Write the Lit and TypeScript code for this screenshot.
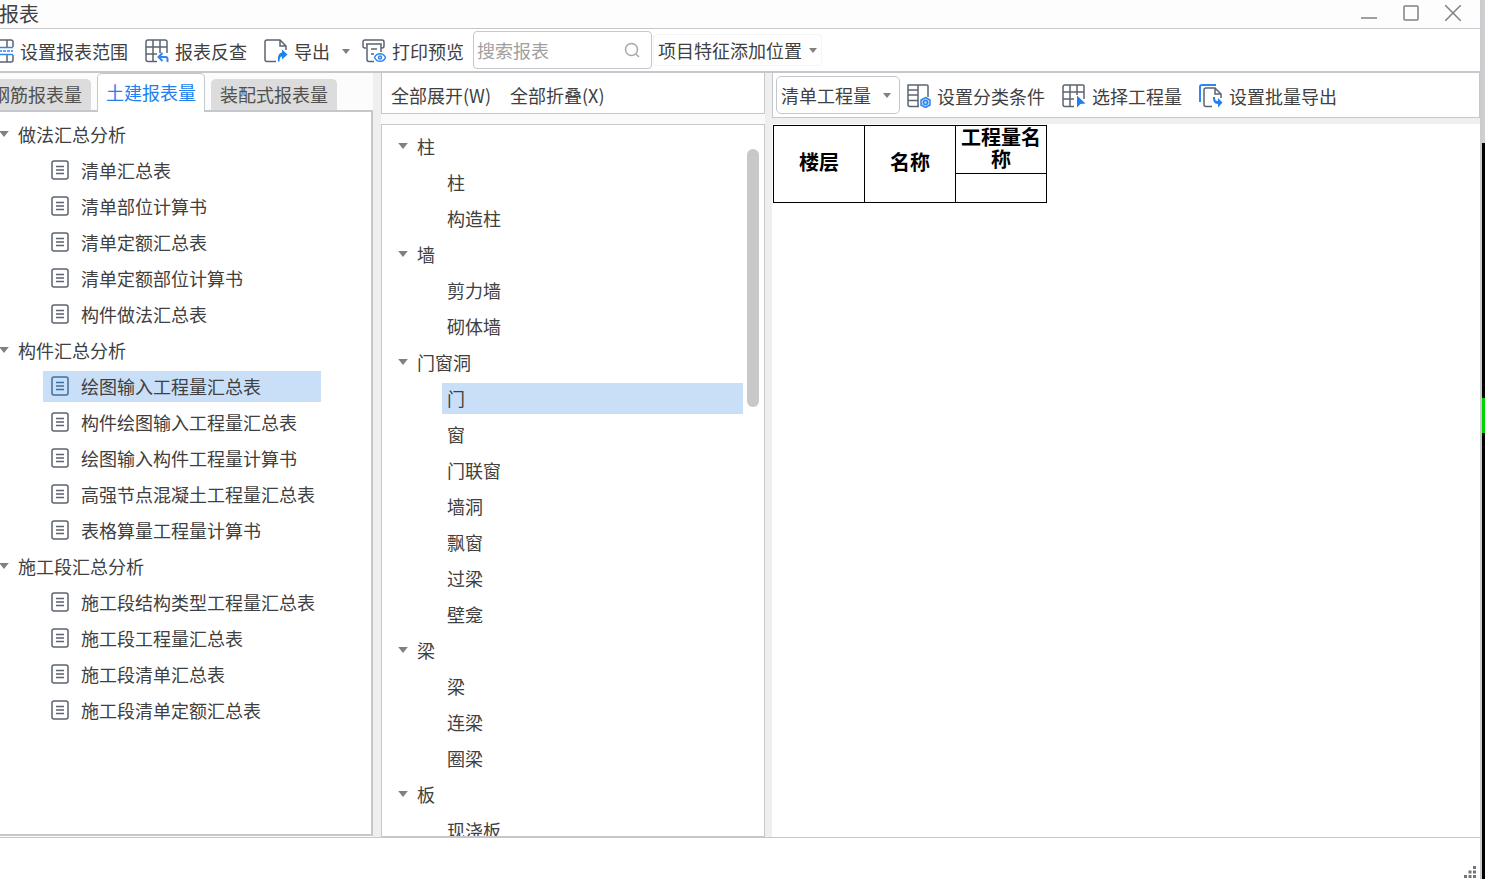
import { LitElement, html, svg, css, nothing } from "lit";
import { customElement, state } from "lit/decorators.js";
import { classMap } from "lit/directives/class-map.js";

interface Group {
  name: string;
  items: string[];
}

const REPORTS: Group[] = [
  { name: "做法汇总分析", items: ["清单汇总表", "清单部位计算书", "清单定额汇总表", "清单定额部位计算书", "构件做法汇总表"] },
  {
    name: "构件汇总分析",
    items: ["绘图输入工程量汇总表", "构件绘图输入工程量汇总表", "绘图输入构件工程量计算书", "高强节点混凝土工程量汇总表", "表格算量工程量计算书"],
  },
  { name: "施工段汇总分析", items: ["施工段结构类型工程量汇总表", "施工段工程量汇总表", "施工段清单汇总表", "施工段清单定额汇总表"] },
];

const COMPONENTS: Group[] = [
  { name: "柱", items: ["柱", "构造柱"] },
  { name: "墙", items: ["剪力墙", "砌体墙"] },
  { name: "门窗洞", items: ["门", "窗", "门联窗", "墙洞", "飘窗", "过梁", "壁龛"] },
  { name: "梁", items: ["梁", "连梁", "圈梁"] },
  { name: "板", items: ["现浇板"] },
];

const TABS = ["钢筋报表量", "土建报表量", "装配式报表量"];

const glyphs = {
  range: svg`
    <path d="M1 8V3a2 2 0 0 1 2-2h18a2 2 0 0 1 2 2v5M1 16v5a2 2 0 0 0 2 2h18a2 2 0 0 0 2-2v-5"/>
    <path d="M9 1v7M17 1v7M9 16v7M17 16v7"/>
    <path class="blue" d="M1 8.500h22M1 15.500h22"/>
    <path class="blue" d="M1 12h22" stroke-dasharray="3 1"/>`,
  lookup: svg`
    <path d="M12 22.500H3a2 2 0 0 1-2-2V3a2 2 0 0 1 2-2h17a2 2 0 0 1 2 2v11"/>
    <path d="M8 1v21M15 1v13M1 8h21M1 15h11"/>
    <path class="blue thick" d="M22.500 23v-3a2 2 0 0 0-2-2H14M17.500 14l-4 4 4 4"/>`,
  exportFile: svg`
    <path d="M12 22.500H3a2 2 0 0 1-2-2V3a2 2 0 0 1 2-2h13l6 6v4M16 1v6h6"/>
    <path class="fill" d="M18 10.500l5.500 5-5.500 5v-3c-2 0-2.500 2-2.500 5h-1.500c-.500-5.500 1-8.500 4-9z"/>`,
  preview: svg`
    <path d="M4 9H3a2 2 0 0 1-2-2V3a2 2 0 0 1 2-2h17a2 2 0 0 1 2 2v4a2 2 0 0 1-2 2h-1"/>
    <path d="M4 5h15v8M5 5v15.500a2 2 0 0 0 2 2h5M9 10h6M9 15h3"/>
    <path class="blue" d="M12.500 18.500c2.500-5 8.500-5 11 0-2.500 5-8.500 5-11 0z"/>
    <circle class="blue" cx="18" cy="18.500" r="1.500"/>`,
  classify: svg`
    <path d="M12 22.500H3a2 2 0 0 1-2-2V1h19a1 1 0 0 1 1 1v11M11 1v21.500M1 6h10M1 11h10M1 16.500h10"/>
    <path class="blue tint" d="M18.500 13.500l4.500 2.500v5l-4.500 2.500-4.500-2.500v-5z"/>
    <circle class="blue" cx="18.500" cy="18.500" r="2"/>`,
  pick: svg`
    <path d="M12 22.500H3a2 2 0 0 1-2-2V3a2 2 0 0 1 2-2h18a1 1 0 0 1 1 1v13"/>
    <path d="M8 1v21M15 1v10M1 8h21M1 15h11"/>
    <path class="fill" d="M15 11.500l8.500 8-5 .500-3.500 3.500z"/>`,
  batch: svg`
    <path class="blue thick" d="M1 18V3a2 2 0 0 1 2-2h14"/>
    <path d="M13 22.500H7a2 2 0 0 1-2-2V6a2 2 0 0 1 2-2h9l6 6v4M16 4v6h6"/>
    <path class="fill" d="M14 13h2c0 3 .500 4 3 4v-3l4.500 4.500-4.500 5v-3.500c-4 0-5-3-5-7z"/>`,
};

const icon = (name: keyof typeof glyphs) =>
  html`<svg class="icon" viewBox="0 0 24 24" aria-hidden="true">${glyphs[name]}</svg>`;

const caret = () =>
  html`<svg class="caret" viewBox="0 0 8 5" aria-hidden="true"><path d="M0 0h8L4 5z" /></svg>`;

const shared = css`
  :host {
    font-family: "Noto Sans CJK SC", sans-serif;
    font-size: 18px;
    color: #404040;
  }
  * {
    box-sizing: border-box;
  }
  button,
  input,
  select {
    font: inherit;
    color: inherit;
    background: none;
    border: 0;
    margin: 0;
    padding: 0;
    outline: none;
  }
  button {
    display: flex;
    align-items: center;
    white-space: nowrap;
  }
  .caret {
    width: 8px;
    height: 5px;
    flex: none;
    fill: #808080;
  }
`;

@customElement("report-tree")
class ReportTree extends LitElement {
  static properties = {
    groups: { attribute: false },
    selected: { state: true },
    closed: { state: true },
    initial: {},
    icons: { type: Boolean, reflect: true },
  };

  declare groups: Group[];
  declare selected: string;
  declare closed: string[];
  declare initial: string;
  declare icons: boolean;

  constructor() {
    super();
    this.groups = [];
    this.closed = [];
    this.selected = "";
    this.initial = "";
    this.icons = false;
  }

  static styles = [
    shared,
    css`
      :host {
        display: block;
      }
      ul {
        list-style: none;
        margin: 0;
        padding: 0;
      }
      .group,
      .item {
        width: 100%;
        text-align: left;
      }
      .group {
        height: 36px;
        gap: 9px;
      }
      .group .caret {
        width: 10px;
        height: 6px;
      }
      .row {
        height: 36px;
        display: flex;
        align-items: center;
        padding-left: 44px;
      }
      .item {
        height: 31px;
        padding-left: 5px;
      }
      .item.on {
        background: #c9dff8;
      }
      :host([icons]) .item {
        padding-left: 8px;
        gap: 12px;
      }
      .sheet {
        width: 18px;
        height: 20px;
        flex: none;
        fill: none;
        stroke: #5c6470;
        stroke-width: 1.5;
      }
      .on .sheet {
        stroke: #3f6f9f;
      }
    `,
  ];

  willUpdate() {
    if (!this.selected) this.selected = this.initial;
  }

  collapseAll(all: boolean) {
    this.closed = all ? this.groups.map((g) => g.name) : [];
  }

  private toggle(name: string) {
    this.closed = this.closed.includes(name) ? this.closed.filter((n) => n !== name) : [...this.closed, name];
  }

  private item(group: string, name: string) {
    const key = `${group}/${name}`;
    return html`<li class="row">
      <button class=${classMap({ item: true, on: key === this.selected })} @click=${() => (this.selected = key)}>
        ${this.icons
          ? html`<svg class="sheet" viewBox="0 0 18 20" aria-hidden="true">
              <rect x="1" y="1" width="16" height="18" rx="2" />
              <path d="M5 6.500h8M5 10h8M5 13.500h8" />
            </svg>`
          : nothing}${name}
      </button>
    </li>`;
  }

  render() {
    return html`<ul>
      ${this.groups.map(
        (g) => html`<li>
          <button class="group" aria-expanded=${!this.closed.includes(g.name)} @click=${() => this.toggle(g.name)}>
            ${caret()}${g.name}
          </button>
          ${this.closed.includes(g.name) ? nothing : html`<ul>${g.items.map((i) => this.item(g.name, i))}</ul>`}
        </li>`
      )}
    </ul>`;
  }
}

@customElement("app-root")
class AppRoot extends LitElement {
  @state() tab = 1;

  static styles = [
    shared,
    css`
      :host {
        display: grid;
        grid-template-columns: minmax(0, 1fr) 3px;
        height: 100vh;
        overflow: hidden;
        background: #fff;
        line-height: 24px;
      }
      .window {
        display: flex;
        flex-direction: column;
        min-height: 0;
        border-right: 2px solid #c9cdd1;
      }
      .desktop {
        display: flex;
        flex-direction: column;
        background: #000;
      }
      .desktop .sky {
        height: 143px;
        background: #cfcfcf;
      }
      .desktop .mark {
        height: 35px;
        margin-top: 255px;
        background: #00d400;
      }
      .title {
        height: 29px;
        flex: none;
        display: flex;
        justify-content: space-between;
        align-items: center;
        border-bottom: 1px solid #c4c8cc;
        background: #fdfdfd;
        padding-right: 19px;
      }
      h1 {
        margin: 0 0 0 -1px;
        font-size: 20px;
        line-height: 28px;
        font-weight: 400;
      }
      .controls {
        display: flex;
        gap: 26px;
        padding-bottom: 2px;
      }
      .controls svg {
        width: 16px;
        height: 16px;
        fill: none;
        stroke: #808080;
        stroke-width: 1.5;
      }
      .toolbar {
        height: 44px;
        flex: none;
        display: flex;
        align-items: center;
        border-bottom: 2px solid #c4c8cc;
      }
      .tool {
        gap: 6px;
        padding-top: 2px;
        margin-right: 17px;
      }
      .toolbar > .tool:first-child {
        margin-left: -10px;
      }
      .tool .caret {
        margin-left: 6px;
      }
      .tool.menu {
        margin-right: 12px;
      }
      .icon {
        width: 24px;
        height: 24px;
        flex: none;
        fill: none;
        stroke: #5c6470;
        stroke-width: 1.5;
      }
      .icon .blue {
        stroke: #2f86f0;
      }
      .icon .tint {
        fill: #b8d8fb;
      }
      .icon .thick {
        stroke-width: 2;
      }
      .icon .fill {
        fill: #2080f0;
        stroke: none;
      }
      .search {
        width: 179px;
        height: 38px;
        display: flex;
        align-items: center;
        border: 1px solid #c4c8cc;
        border-radius: 4px;
        padding: 0 11px 0 3px;
        margin-left: -8px;
      }
      .search input {
        flex: 1;
        min-width: 0;
      }
      .search input::placeholder {
        color: #a0a0a0;
        opacity: 1;
      }
      .search svg {
        width: 16px;
        height: 16px;
        fill: none;
        stroke: #a8a8a8;
        stroke-width: 1.5;
      }
      .place {
        height: 32px;
        gap: 7px;
        margin-left: 1px;
        padding: 0 4px;
        border: 1px solid #f4f4f4;
        border-radius: 4px;
      }
      .main {
        flex: 1;
        min-height: 0;
        display: grid;
        grid-template-columns: 373px 384px minmax(0, 1fr);
        gap: 8px;
        background: #efefef;
        border-bottom: 1px solid #c4c8cc;
      }
      .left,
      .middle,
      .right {
        display: flex;
        flex-direction: column;
        min-width: 0;
        min-height: 0;
      }
      .left {
        background: #fcfcfc;
      }
      .tabs {
        height: 37px;
        flex: none;
        display: flex;
        align-items: flex-end;
        gap: 6px;
        margin-left: -17px;
      }
      .tab {
        height: 31px;
        padding: 0 8px 3px;
        background: #dcdcdc;
        border: 1px solid #dcdcdc;
        border-bottom: 0;
        border-radius: 5px 5px 0 0;
        color: #505050;
      }
      .tab.on {
        height: 39px;
        padding: 0 8px 2px;
        margin-bottom: -2px;
        z-index: 1;
        background: #fff;
        border-color: #c4c8cc;
        color: #2080f0;
      }
      .left .panel {
        flex: 1;
        min-height: 0;
        overflow: hidden;
        background: #fff;
        border: 2px solid #c4c8cc;
        border-left: 0;
        padding: 4px 50px 0 0;
        margin-bottom: 1px;
      }
      .left report-tree {
        margin-left: -1px;
      }
      .middle {
        gap: 10px;
        background: #fafafa;
      }
      .actions {
        height: 41px;
        flex: none;
        display: flex;
        gap: 19px;
        align-items: center;
        padding: 4px 9px 0;
        background: #fff;
        border: 1px solid #c4c8cc;
        border-top: 0;
      }
      .middle .panel {
        flex: 1;
        min-height: 0;
        overflow: hidden;
        position: relative;
        background: #fff;
        border: 1px solid #c4c8cc;
        padding: 3px 21px 0 16px;
      }
      .thumb {
        position: absolute;
        top: 24px;
        right: 5px;
        width: 12px;
        height: 258px;
        border-radius: 6px;
        background: #c8c8c8;
      }
      .right {
        gap: 6px;
        margin-left: -1px;
      }
      .options {
        height: 45px;
        flex: none;
        display: flex;
        align-items: center;
        padding: 3px 3px;
        background: #fff;
        border: 1px solid #c4c8cc;
        border-top: 0;
      }
      .pick {
        display: grid;
        align-items: center;
        width: 124px;
        height: 38px;
        margin-right: 7px;
        border: 1px solid #c4c8cc;
        border-radius: 5px;
      }
      .pick > * {
        grid-area: 1 / 1;
      }
      .pick select {
        appearance: none;
        width: 100%;
        height: 100%;
        padding-left: 4px;
      }
      .pick .caret {
        justify-self: end;
        margin-right: 8px;
        pointer-events: none;
      }
      .sheet {
        flex: 1;
        background: #fff;
        padding: 1px 0 0 1px;
      }
      table {
        border-collapse: collapse;
        table-layout: fixed;
        width: 274px;
        color: #000;
        font-size: 20px;
        line-height: 22px;
      }
      th,
      td {
        border: 1px solid #000;
        padding: 0 5px 5px;
      }
      .upper {
        height: 48px;
      }
      .upper th:last-child {
        padding: 0 4px 3px;
      }
      .lower {
        height: 29px;
      }
      .status {
        height: 41px;
        flex: none;
        display: flex;
        justify-content: flex-end;
        align-items: flex-end;
        background: #fff;
        padding-right: 3px;
      }
      .status svg {
        width: 14px;
        height: 14px;
        fill: #70747c;
      }
    `,
  ];

  private collapse(all: boolean) {
    (this.renderRoot.querySelector(".middle report-tree") as ReportTree).collapseAll(all);
  }

  render() {
    return html`
      <div class="window">
        <header class="title">
          <h1>报表</h1>
          <div class="controls">
            <button aria-label="最小化"><svg viewBox="0 0 16 16"><path d="M0 13h16" /></svg></button>
            <button aria-label="最大化"><svg viewBox="0 0 16 16"><rect x="1" y="1" width="14" height="14" rx="1" /></svg></button>
            <button aria-label="关闭"><svg viewBox="0 0 16 16"><path d="M0 0l16 16M16 0L0 16" /></svg></button>
          </div>
        </header>
        <div class="toolbar">
          <button class="tool">${icon("range")}设置报表范围</button>
          <button class="tool">${icon("lookup")}报表反查</button>
          <button class="tool menu">${icon("exportFile")}导出${caret()}</button>
          <button class="tool">${icon("preview")}打印预览</button>
          <div class="search">
            <input type="text" placeholder="搜索报表" aria-label="搜索报表" />
            <svg viewBox="0 0 16 16" aria-hidden="true"><circle cx="7.500" cy="7.500" r="6" /><path d="M12 12l3 3" /></svg>
          </div>
          <button class="place">项目特征添加位置${caret()}</button>
        </div>
        <main class="main">
          <section class="left">
            <div class="tabs" role="tablist">
              ${TABS.map(
                (t, i) => html`<button
                  role="tab"
                  aria-selected=${i === this.tab}
                  class=${classMap({ tab: true, on: i === this.tab })}
                  @click=${() => (this.tab = i)}
                >${t}</button>`
              )}
            </div>
            <div class="panel">
              <report-tree icons .groups=${REPORTS} initial="构件汇总分析/绘图输入工程量汇总表"></report-tree>
            </div>
          </section>
          <section class="middle">
            <div class="actions">
              <button @click=${() => this.collapse(false)}>全部展开(W)</button>
              <button @click=${() => this.collapse(true)}>全部折叠(X)</button>
            </div>
            <div class="panel">
              <report-tree .groups=${COMPONENTS} initial="门窗洞/门"></report-tree>
              <div class="thumb"></div>
            </div>
          </section>
          <section class="right">
            <div class="options">
              <div class="pick">
                <select aria-label="工程量类型"><option>清单工程量</option></select>
                ${caret()}
              </div>
              <button class="tool">${icon("classify")}设置分类条件</button>
              <button class="tool">${icon("pick")}选择工程量</button>
              <button class="tool">${icon("batch")}设置批量导出</button>
            </div>
            <div class="sheet">
              <table>
                <tr class="upper"><th rowspan="2">楼层</th><th rowspan="2">名称</th><th>工程量名称</th></tr>
                <tr class="lower"><td></td></tr>
              </table>
            </div>
          </section>
        </main>
        <footer class="status">
          <svg viewBox="0 0 14 14" aria-hidden="true">
            <path d="M10 1h3v3h-3zM10 5.500h3v3h-3zM5.500 5.500h3v3h-3zM10 10h3v3h-3zM5.500 10h3v3h-3zM1 10h3v3H1z" />
          </svg>
        </footer>
      </div>
      <div class="desktop"><div class="sky"></div><div class="mark"></div></div>
    `;
  }
}
